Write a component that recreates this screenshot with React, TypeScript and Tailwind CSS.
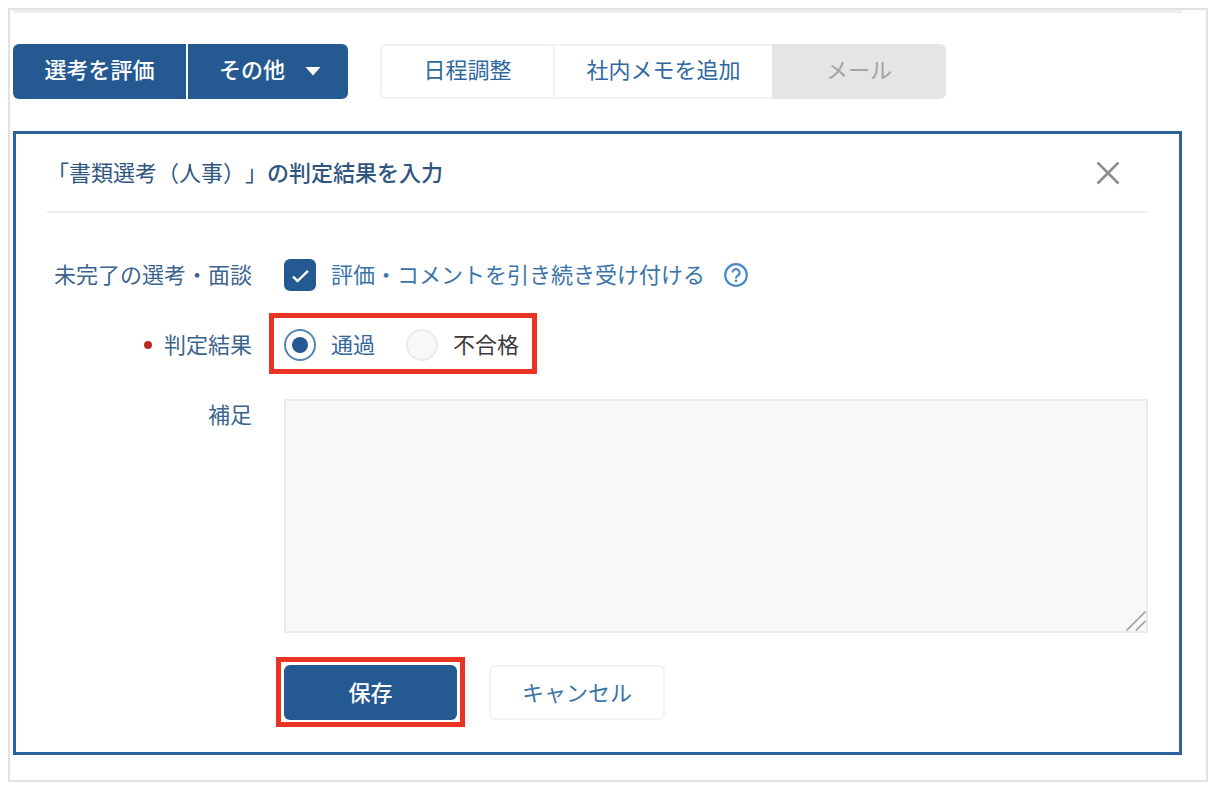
import { useState } from "react";
import type { ReactNode } from "react";

const results = [
  { value: "pass", label: "通過" },
  { value: "fail", label: "不合格" },
];

// Red frame that draws attention to the control it wraps.
function Highlight({ className, children }: { className: string; children: ReactNode }) {
  return (
    <div className="relative">
      {children}
      <span aria-hidden className={`pointer-events-none absolute border-5 border-[#ea3323] ${className}`} />
    </div>
  );
}

function Toolbar() {
  return (
    <div className="flex flex-wrap gap-8">
      <div className="flex h-[55px] gap-[2px] font-medium text-white">
        <button type="button" className="w-[173px] rounded-l-md bg-[#255991] pb-2">
          選考を評価
        </button>
        <button type="button" className="flex w-40 items-center justify-center gap-5 rounded-r-md bg-[#255991] pb-2 pl-1">
          その他
          <svg aria-hidden className="mt-2 h-[9px] w-4" viewBox="0 0 16 9" fill="currentColor">
            <path d="M0.5 0h15L8 8.5z" />
          </svg>
        </button>
      </div>

      <div className="flex h-[55px] text-[#2f689f]">
        <button type="button" className="w-[173px] rounded-l-md border-2 border-r-0 border-[#eef3f8] pb-2">
          日程調整
        </button>
        <button type="button" className="w-[219px] border-2 border-r-0 border-[#eef3f8] pb-2">
          社内メモを追加
        </button>
        <button type="button" disabled className="w-[174px] rounded-r-md bg-[#e5e5e5] pb-2 text-[#a3a3a3]">
          メール
        </button>
      </div>
    </div>
  );
}

export default function App() {
  const [accepting, setAccepting] = useState(true);
  const [result, setResult] = useState("pass");
  const [note, setNote] = useState("");

  return (
    <main className="mt-2 mr-[10px] mb-3 ml-2 border-2 border-[#e2e2e2] bg-white pr-6 pb-[25px] pl-[3px] font-['Noto_Sans_CJK_JP',sans-serif] text-[22px] leading-7 text-[#3a648d] [text-spacing-trim:space-all]">
      <div className="mb-[31px] h-[3px] bg-[#eeeeee]" />
      <Toolbar />

      <section className="mt-8 border-3 border-[#2c639c] px-[31px] pb-8">
        <header className="flex h-[79px] items-center justify-between border-b-2 border-[#eeeeee]">
          <h1 className="pb-1 text-[#2f5680]">
            「書類選考（人事）」<span className="font-medium">の判定結果を入力</span>
          </h1>
          <button type="button" aria-label="閉じる" className="flex w-20 justify-center text-[#8e8e8e]">
            <svg className="size-6" viewBox="0 0 24 24" fill="none" stroke="currentColor" strokeWidth="2.6">
              <path d="M1.5 1.5l21 21M22.5 1.5l-21 21" />
            </svg>
          </button>
        </header>

        <form onSubmit={(e) => e.preventDefault()}>
          <div className="grid grid-cols-[205px_1fr] gap-x-8 gap-y-[38px] pt-[46px]">
            <span className="text-right">未完了の選考・面談</span>
            <div className="flex items-center">
              <label className="flex items-start gap-[15px] text-[#3b74a8]">
                <span className="relative flex size-8">
                  <input
                    type="checkbox"
                    checked={accepting}
                    onChange={(e) => setAccepting(e.target.checked)}
                    className="size-8 appearance-none rounded-md border-2 border-[#e5e5e5] bg-[#f8f8f8] checked:border-[#255991] checked:bg-[#255991]"
                  />
                  {accepting && (
                    <svg aria-hidden className="pointer-events-none absolute inset-0 text-white" viewBox="0 0 32 32" fill="none" stroke="currentColor" strokeWidth="2.4">
                      <path d="M9 17.5l4.5 4.5L24 11.8" />
                    </svg>
                  )}
                </span>
                評価・コメントを引き続き受け付ける
              </label>
              <button type="button" aria-label="ヘルプ" className="ml-[19px] text-[#4a8ac9]">
                <svg className="size-6" viewBox="0 0 24 24" fill="none" stroke="currentColor" strokeWidth="2.2">
                  <circle cx="12" cy="12" r="10.8" />
                  <path d="M8.4 9.6a3.6 3.5 0 1 1 5.7 2.8c-1.3.9-2.1 1.5-2.1 3" />
                  <path d="M12 16.7v2.3" />
                </svg>
              </button>
            </div>

            <span id="result-label" className="flex h-7 items-center justify-end gap-3">
              <span className="mt-1 size-2 rounded-full bg-[#bb2a20]" />
              判定結果
            </span>
            <div className="flex">
              <Highlight className="-top-4 -right-[18px] -bottom-[13px] -left-[15px]">
                <div role="radiogroup" aria-labelledby="result-label" className="flex gap-[31px]">
                  {results.map((item) => (
                    <label
                      className={`flex items-start gap-[15px] ${item.value === result ? "text-[#34699d]" : "text-[#3c3c3c]"}`}
                      key={item.value}
                    >
                      <input
                        type="radio"
                        name="result"
                        value={item.value}
                        checked={item.value === result}
                        onChange={() => setResult(item.value)}
                        className="flex size-8 appearance-none items-center justify-center rounded-full border-2 border-[#eaeaea] bg-[#f8f8f8] before:size-4 before:rounded-full checked:border-[#5585b3] checked:bg-white checked:before:bg-[#255991]"
                      />
                      {item.label}
                    </label>
                  ))}
                </div>
              </Highlight>
            </div>

            <label htmlFor="note" className="text-right">
              補足
            </label>
            <div className="relative">
              <textarea
                id="note"
                value={note}
                onChange={(e) => setNote(e.target.value)}
                className="block h-[234px] w-full resize-none border-2 border-[#ebebeb] bg-[#f8f8f8] px-3 py-2 outline-none"
              />
              <svg aria-hidden className="pointer-events-none absolute right-[2px] bottom-[2px] size-5 text-[#a8a8a8]" viewBox="0 0 20 20" fill="none" stroke="currentColor" strokeWidth="1.8">
                <path d="M0.5 19.5L19.5 0.5M10 19.5l9.5-9.5" />
              </svg>
            </div>
          </div>

          <div className="mt-8 flex gap-8 pl-[237px]">
            <Highlight className="-top-2 -right-2 -bottom-[7px] -left-2">
              <button type="submit" className="block h-[55px] w-[173px] rounded-md bg-[#255991] pb-1 font-medium text-white">
                保存
              </button>
            </Highlight>
            <button type="button" className="h-[55px] w-44 rounded-md border-2 border-[#eef3f8] pb-1 text-[#3b74a8]">
              キャンセル
            </button>
          </div>
        </form>
      </section>
    </main>
  );
}
